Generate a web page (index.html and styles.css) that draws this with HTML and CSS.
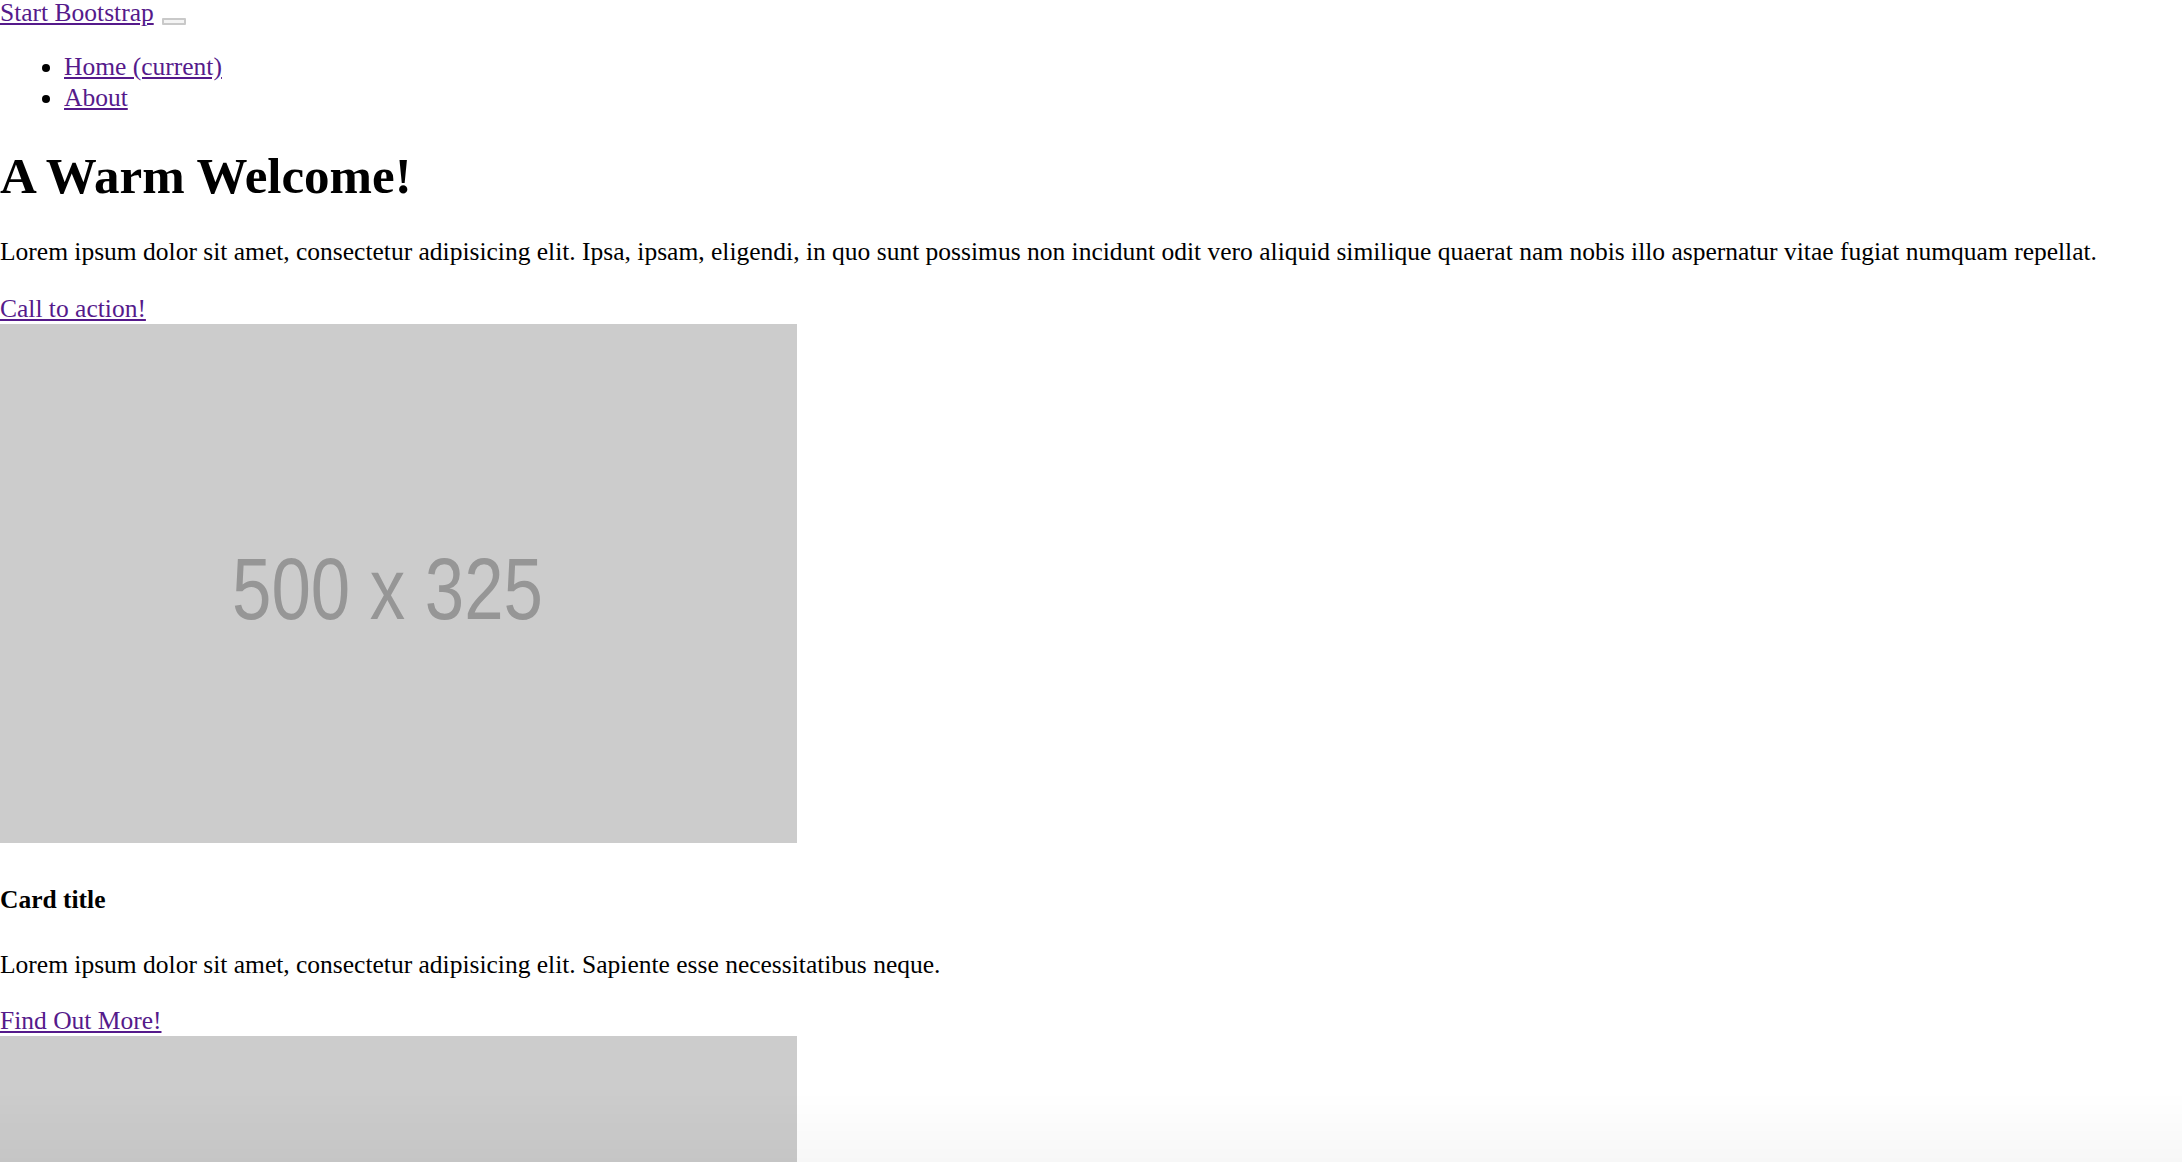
FILE: index.html
```html
<!DOCTYPE html>
<html lang="en">
<head>
<meta charset="utf-8">
<title>Small Business - Start Bootstrap</title>
<link rel="stylesheet" href="styles.css">
</head>
<body>
<nav class="navbar">
  <a class="brand" href="#">Start Bootstrap</a>
  <button class="toggler" type="button" aria-label="Toggle navigation"></button>
</nav>
<ul class="nav-list">
  <li><a href="#">Home (current)</a></li>
  <li><a href="#">About</a></li>
</ul>
<header class="hero">
  <h1 class="hero-title">A Warm Welcome!</h1>
  <p class="text">Lorem ipsum dolor sit amet, consectetur adipisicing elit. Ipsa, ipsam, eligendi, in quo sunt possimus non incidunt odit vero aliquid similique quaerat nam nobis illo aspernatur vitae fugiat numquam repellat.</p>
  <a class="link" href="#">Call to action!</a>
</header>
<div class="card">
  <svg class="card-img" width="797" height="519" viewBox="0 0 797 519" xmlns="http://www.w3.org/2000/svg" role="img" aria-label="500 x 325"><rect width="797" height="519" fill="#cccccc"/><text x="232" y="295" font-family="Liberation Sans, Arial, sans-serif" font-size="88" fill="#969696" textLength="311" lengthAdjust="spacingAndGlyphs">500 x 325</text></svg>
  <h4 class="card-title">Card title</h4>
  <p class="text">Lorem ipsum dolor sit amet, consectetur adipisicing elit. Sapiente esse necessitatibus neque.</p>
  <a class="link" href="#">Find Out More!</a>
</div>
<div class="card">
  <svg class="card-img" width="797" height="519" viewBox="0 0 797 519" xmlns="http://www.w3.org/2000/svg" role="img" aria-label="500 x 325"><rect width="797" height="519" fill="#cccccc"/></svg>
</div>
<div class="bottom-fade"></div>
</body>
</html>
```
FILE: styles.css
```css
html, body {
  margin: 0;
  padding: 0;
  background: #ffffff;
}

body {
  font-family: "Liberation Serif", "Times New Roman", serif;
  font-size: 25.5px;
  line-height: 31px;
  color: #000000;
}

a {
  color: #551a8b;
  text-decoration: underline;
}

.navbar {
  display: flex;
  align-items: flex-start;
  line-height: 25px;
}

.brand {
  display: block;
}

.toggler {
  box-sizing: border-box;
  width: 24px;
  height: 7px;
  margin: 18px 0 0 8px;
  padding: 0;
  border: 2px solid #c9c9c9;
  border-radius: 1px;
  background: #f4f4f4;
}

.nav-list {
  margin: 26px 0 25.5px;
  padding-left: 64px;
  list-style: disc;
}

.hero-title {
  margin: 34px 0 31px;
  font-size: 51px;
  line-height: 58px;
  font-weight: bold;
}

.text {
  margin: 25.5px 0;
}

.card-img {
  vertical-align: baseline;
}

.card-title {
  margin: 34px 0;
  font-size: 25.5px;
  line-height: 31px;
  font-weight: bold;
}

.bottom-fade {
  position: fixed;
  left: 0;
  right: 0;
  bottom: 0;
  height: 70px;
  background: linear-gradient(to bottom, rgba(0, 0, 0, 0), rgba(0, 0, 0, 0.03));
  pointer-events: none;
}
```
